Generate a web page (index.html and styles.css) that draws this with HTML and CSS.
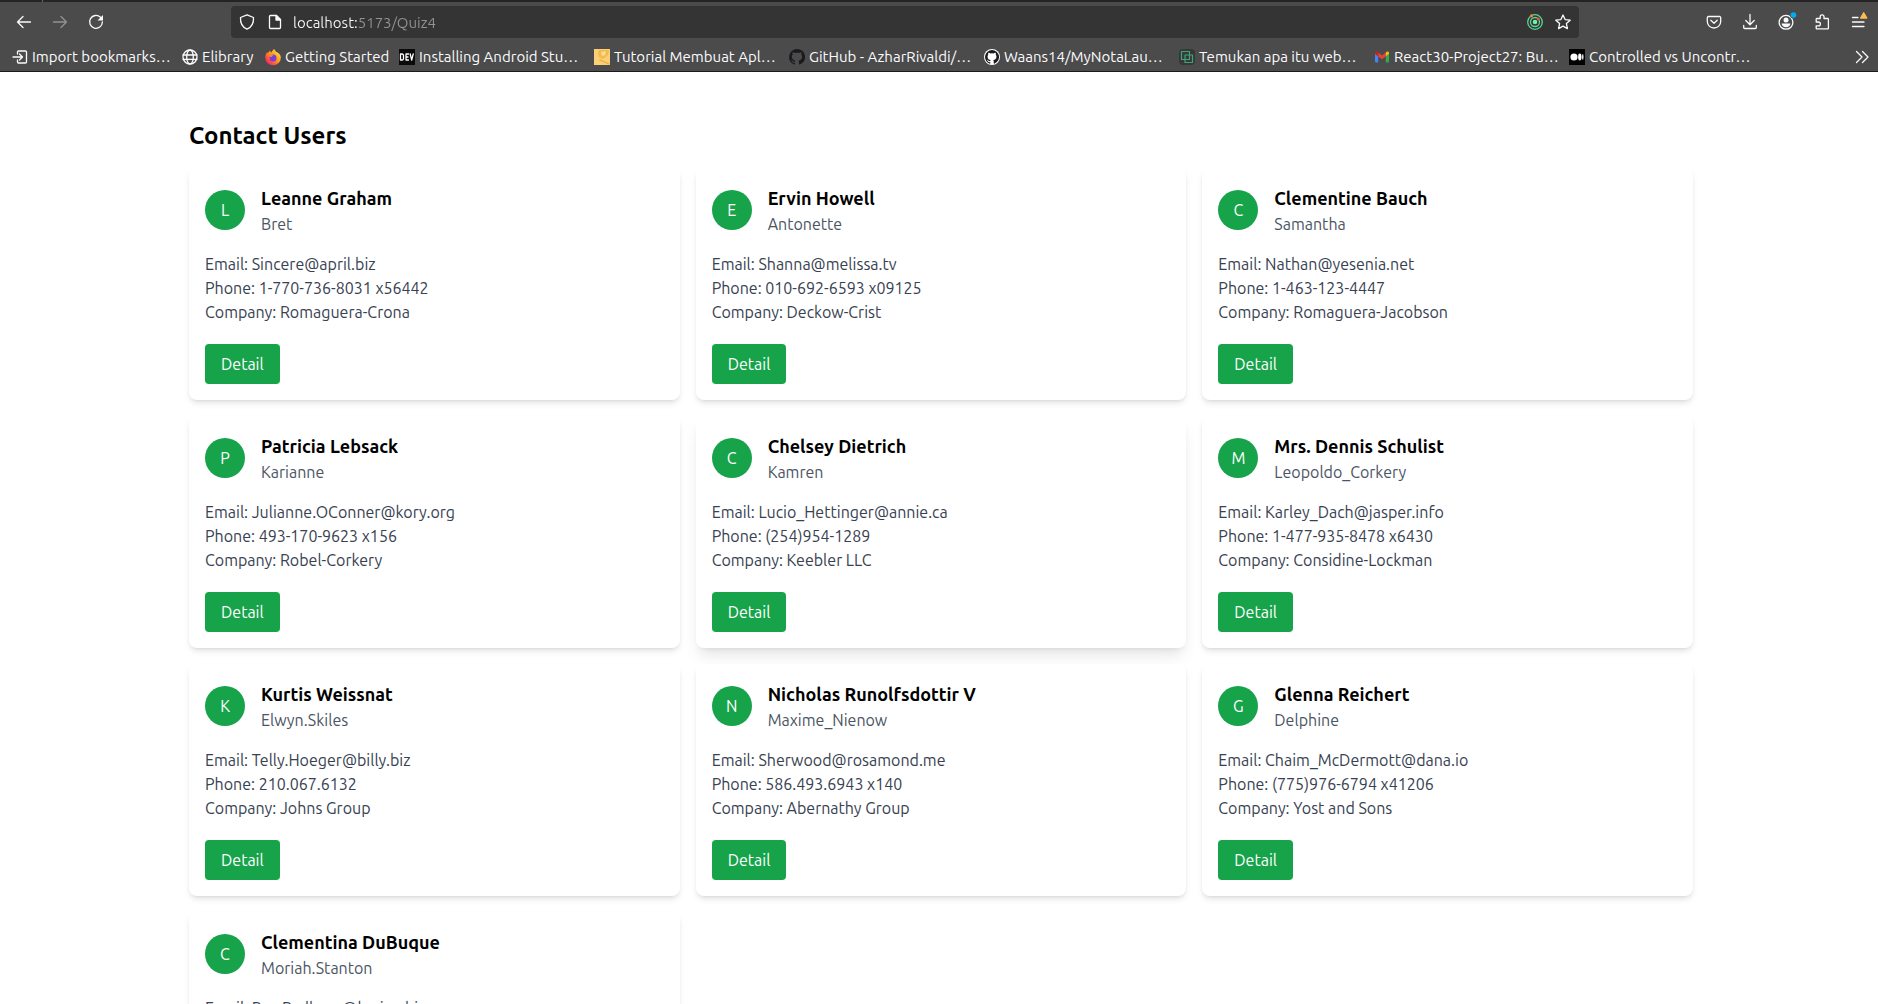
FILE: index.html
```html
<!DOCTYPE html>
<html lang="en">
<head>
<meta charset="utf-8">
<title>Contact Users</title>
<link rel="stylesheet" href="styles.css">
</head>
<body>
<header class="browser">
  <div class="tab-edge"></div>
  <div class="toolbar">
    <nav class="tools" aria-label="History">
      <button class="tool" aria-label="Back"><svg class="icon" viewBox="0 0 16 16"><path d="M14.500 8H1.500M7 2.500 1.500 8 7 13.500"/></svg></button>
      <button class="tool tool-off" aria-label="Forward" disabled><svg class="icon" viewBox="0 0 16 16"><path d="M1.500 8h13M9 2.500 14.500 8 9 13.500"/></svg></button>
      <button class="tool" aria-label="Reload"><svg class="icon" viewBox="0 0 16 16"><path d="M12.500 3.300A6.400 6.400 0 1 0 14.400 8"/><path d="M15 1v5.500H9.500z" fill="currentColor" stroke="none"/></svg></button>
    </nav>
    <div class="urlbar">
      <svg class="icon" viewBox="0 0 16 16"><path d="M8 .8 14.500 3.500c.3 5-1.500 9.500-6.500 11.700C3 13 1.200 8.500 1.500 3.500z"/></svg>
      <svg class="icon" viewBox="0 0 16 16"><path d="M3.500 1.500H9.500l4 4v8a1 1 0 0 1-1 1h-9a1 1 0 0 1-1-1v-11a1 1 0 0 1 1-1z"/><path class="solid" d="M9 1.500V6h4.500z"/></svg>
      <input class="url" type="text" aria-label="Address" value="localhost:5173/Quiz4">
      <svg class="icon" viewBox="0 0 16 16"><g stroke="#5bd69a"><circle cx="8" cy="8" r="7.300"/><circle cx="8" cy="8" r="4.500"/></g><circle cx="8" cy="8" r="2.300" fill="#6ff0a8" stroke="none"/><circle cx="4.500" cy="1.800" r="1.600" fill="#f5822a" stroke="none"/><circle cx="11.300" cy="5" r="1.500" fill="#f2502a" stroke="none"/></svg>
      <svg class="icon" viewBox="0 0 16 16"><path d="m8 1 2.100 4.600 5.100.6-3.800 3.400 1 5L8 12.100l-4.400 2.500 1-5L.8 6.200l5.100-.6z"/></svg>
    </div>
    <div class="tools">
      <button class="tool" aria-label="Save to Pocket"><svg class="icon" viewBox="0 0 16 16"><path d="M2.500 2.500h11a1.200 1.200 0 0 1 1.200 1.200V7.500a6.700 6.500 0 0 1-13.400 0V3.700a1.200 1.200 0 0 1 1.200-1.200zM4.800 6.300 8 9.300l3.200-3"/></svg></button>
      <button class="tool" aria-label="Downloads"><svg class="icon" viewBox="0 0 16 16"><path d="M8 .5v10M3.800 6.500 8 10.700l4.200-4.200M1.700 11.500v2a1 1 0 0 0 1 1h10.600a1 1 0 0 0 1-1v-2"/></svg></button>
      <button class="tool" aria-label="Account"><svg class="icon" viewBox="0 0 16 16"><circle cx="8" cy="8.300" r="6.900"/><g fill="currentColor" stroke="none"><circle cx="8" cy="6" r="2.500"/><path d="M3.500 9.500h9c-.3 2.400-2.200 3.800-4.500 3.800s-4.200-1.400-4.500-3.800z"/></g><circle cx="15.500" cy="1" r="3.500" fill="#4b4b4b" stroke="none"/><circle cx="15.500" cy="1" r="2.800" fill="#00adf0" stroke="none"/></svg></button>
      <button class="tool" aria-label="Extensions"><svg class="icon" viewBox="0 0 16 16"><path d="M2.200 8V5.200a.7.700 0 0 1 .7-.7h3.300V2.700a1.900 1.900 0 0 1 3.800 0v1.800h3.700a.7.700 0 0 1 .7.700v9a.7.700 0 0 1-.7.700H2.900a.7.700 0 0 1-.7-.7v-2.400h2.300a1.900 1.900 0 0 0 0-3.800z"/></svg></button>
      <button class="tool" aria-label="Menu"><svg class="icon" viewBox="0 0 16 16"><path d="M2.500 3.500H8M2.500 8h11.500M2.500 12.500h11.500"/><path d="M13.700-1.200 16.800 4h-6.200z" fill="#ffbd4f" stroke="#ffbd4f"/></svg></button>
    </div>
  </div>
  <nav class="bookmarks" aria-label="Bookmarks">
    <a class="bookmark bookmark-import" href="#"><svg class="icon" viewBox="0 0 16 16"><path d="M5.500 5V3a1 1 0 0 1 1-1h7a1 1 0 0 1 1 1v10a1 1 0 0 1-1 1h-7a1 1 0 0 1-1-1v-2M1 8h9M7.500 5l3 3-3 3"/></svg>Import bookmarks…</a>
    <a class="bookmark bookmark-short" href="#"><svg class="icon" viewBox="0 0 16 16"><circle cx="8" cy="8" r="7"/><ellipse cx="8" cy="8" rx="3.300" ry="7"/><path d="M1 6h14M1 10.300h14"/></svg>Elibrary</a>
    <a class="bookmark bookmark-medium" href="#"><svg class="icon" viewBox="0 0 16 16" stroke="none"><defs><linearGradient id="fire" x1="1" y1="0" x2="0" y2="1"><stop offset="0" stop-color="#fff44f"/><stop offset=".45" stop-color="#ff9a1f"/><stop offset=".8" stop-color="#ff3750"/><stop offset="1" stop-color="#e31587"/></linearGradient></defs><path fill="url(#fire)" d="M9 0c1 1 1.700 1.800 2 2.800 3 1.200 5 3.200 4.800 6A7.700 7.300 0 0 1 .3 9C.1 6.500 1 4.500 2.200 3l.6 1.400C3.500 3.200 4.500 2.500 5 1.500c.2 1 .7 1.700 1.500 2C7 2 8 1.200 9 0z"/><circle cx="8" cy="9" r="3.500" fill="#7a3fd6"/><path fill="#ff8a16" d="M3.500 5.500C5 5 7 5 8.500 6.500 7 6.500 7.500 8 6 8s-2-1-2.500-2.500z"/></svg>Getting Started</a>
    <a class="bookmark" href="#"><svg class="icon" viewBox="0 0 16 16" stroke="none"><path fill="#0a0a0a" d="M0 0h16v16H0z"/><path stroke="#fff" stroke-width="1.300" d="M1.500 5v6H3c1 0 1.500-.6 1.500-1.500v-3C4.500 5.600 4 5 3 5zM9.500 5H7v6h2.500M7 8h2M11.200 5l1.500 6 1.500-6"/></svg>Installing Android Stu…</a>
    <a class="bookmark" href="#"><svg class="icon" viewBox="0 0 16 16" stroke="none"><path fill="#f9cf78" d="M0 0h16v16H0z"/><path fill="#f5b94c" d="M5 1h10l-1 5-5 4-4-2-1-4z"/><path fill="#fbdc9a" d="m7 3 5-1-1 4-3 1z"/><path stroke="#f0aa32" d="m6 11 9 4"/></svg>Tutorial Membuat Apl…</a>
    <a class="bookmark" href="#"><svg class="icon" viewBox="0 0 16 16" stroke="none"><path fill="#1b1b1f" d="M8 0a8 8 0 0 0-2.500 15.600c.4.100.5-.2.500-.4v-1.400c-2.200.5-2.700-1-2.700-1-.4-.9-.9-1.200-.9-1.200-.7-.5.1-.5.100-.5.800.1 1.200.8 1.200.8.700 1.200 1.900.9 2.300.7.100-.5.300-.9.500-1.100-1.800-.2-3.600-.9-3.600-4 0-.9.300-1.600.8-2.100-.1-.2-.4-1 .1-2.100 0 0 .7-.2 2.200.8a7.500 7.500 0 0 1 4 0c1.500-1 2.200-.8 2.200-.8.500 1.100.2 1.900.1 2.100.5.600.8 1.300.8 2.100 0 3.100-1.900 3.800-3.700 4 .3.300.6.800.6 1.500v2.200c0 .2.100.5.600.4A8 8 0 0 0 8 0z"/></svg>GitHub - AzharRivaldi/…</a>
    <a class="bookmark" href="#"><svg class="icon" viewBox="0 0 16 16" stroke="none"><circle cx="8" cy="8" r="8" fill="#fff"/><path transform="translate(1 1) scale(.875)" fill="#1b1b1f" d="M8 0a8 8 0 0 0-2.500 15.600c.4.100.5-.2.500-.4v-1.400c-2.200.5-2.700-1-2.700-1-.4-.9-.9-1.200-.9-1.200-.7-.5.1-.5.100-.5.800.1 1.200.8 1.200.8.700 1.200 1.900.9 2.300.7.100-.5.300-.9.500-1.100-1.800-.2-3.600-.9-3.600-4 0-.9.300-1.600.8-2.100-.1-.2-.4-1 .1-2.100 0 0 .7-.2 2.200.8a7.500 7.500 0 0 1 4 0c1.500-1 2.200-.8 2.200-.8.500 1.100.2 1.900.1 2.100.5.600.8 1.300.8 2.100 0 3.100-1.900 3.800-3.700 4 .3.300.6.800.6 1.500v2.200c0 .2.100.5.600.4A8 8 0 0 0 8 0z"/></svg>Waans14/MyNotaLau…</a>
    <a class="bookmark" href="#"><svg class="icon" viewBox="0 0 16 16" stroke="none"><rect width="16" height="16" rx="4" fill="#383838"/><path stroke="#3aa57a" stroke-width="1.200" d="M2.500 2.500h8v8h-8zM6 6h7.500v7.500H6z"/></svg>Temukan apa itu web…</a>
    <a class="bookmark" href="#"><svg class="icon" viewBox="0 0 16 16" stroke="none"><path fill="#4285f4" d="M1 4.500 4.200 7v6.500H2a1 1 0 0 1-1-1z"/><path fill="#34a853" d="M15 4.500 11.800 7v6.500H14a1 1 0 0 0 1-1z"/><path fill="#ea4335" d="M4.200 3.500 8 6.500l3.800-3V7.300L8 10.200 4.200 7.300z"/><path fill="#c5221f" d="M1 4c0-1.500 1.700-2 2.700-1l.5.500v3.800L1 4.900z"/><path fill="#fbbc04" d="M15 4c0-1.500-1.700-2-2.700-1l-.5.500v3.800L15 4.900z"/></svg>React30-Project27: Bu…</a>
    <a class="bookmark" href="#"><svg class="icon" viewBox="0 0 16 16" stroke="none"><path fill="#000" d="M0 0h16v16H0z"/><g fill="#fff"><circle cx="5" cy="8" r="3.600"/><ellipse cx="10.800" cy="8" rx="1.700" ry="3.400"/><ellipse cx="13.800" cy="8" rx=".7" ry="3"/></g></svg>Controlled vs Uncontr…</a>
    <button class="more" aria-label="More bookmarks"><svg class="icon" viewBox="0 0 16 16"><path d="m2.500 2.500 5.500 5.500-5.500 5.500M8.500 2.500 14 8l-5.500 5.500"/></svg></button>
  </nav>
</header>
<main class="page">
  <div class="container">
    <h1 class="title">Contact Users</h1>
    <div class="grid">
      <article class="card">
        <div class="person"><span class="avatar">L</span><div><h2 class="name">Leanne Graham</h2><p class="username">Bret</p></div></div>
        <div class="info"><p>Email: Sincere@april.biz</p><p>Phone: 1-770-736-8031 x56442</p><p>Company: Romaguera-Crona</p></div>
        <button class="detail">Detail</button>
      </article>
      <article class="card">
        <div class="person"><span class="avatar">E</span><div><h2 class="name">Ervin Howell</h2><p class="username">Antonette</p></div></div>
        <div class="info"><p>Email: Shanna@melissa.tv</p><p>Phone: 010-692-6593 x09125</p><p>Company: Deckow-Crist</p></div>
        <button class="detail">Detail</button>
      </article>
      <article class="card">
        <div class="person"><span class="avatar">C</span><div><h2 class="name">Clementine Bauch</h2><p class="username">Samantha</p></div></div>
        <div class="info"><p>Email: Nathan@yesenia.net</p><p>Phone: 1-463-123-4447</p><p>Company: Romaguera-Jacobson</p></div>
        <button class="detail">Detail</button>
      </article>
      <article class="card">
        <div class="person"><span class="avatar">P</span><div><h2 class="name">Patricia Lebsack</h2><p class="username">Karianne</p></div></div>
        <div class="info"><p>Email: Julianne.OConner@kory.org</p><p>Phone: 493-170-9623 x156</p><p>Company: Robel-Corkery</p></div>
        <button class="detail">Detail</button>
      </article>
      <article class="card card-raised">
        <div class="person"><span class="avatar">C</span><div><h2 class="name">Chelsey Dietrich</h2><p class="username">Kamren</p></div></div>
        <div class="info"><p>Email: Lucio_Hettinger@annie.ca</p><p>Phone: (254)954-1289</p><p>Company: Keebler LLC</p></div>
        <button class="detail">Detail</button>
      </article>
      <article class="card">
        <div class="person"><span class="avatar">M</span><div><h2 class="name">Mrs. Dennis Schulist</h2><p class="username">Leopoldo_Corkery</p></div></div>
        <div class="info"><p>Email: Karley_Dach@jasper.info</p><p>Phone: 1-477-935-8478 x6430</p><p>Company: Considine-Lockman</p></div>
        <button class="detail">Detail</button>
      </article>
      <article class="card">
        <div class="person"><span class="avatar">K</span><div><h2 class="name">Kurtis Weissnat</h2><p class="username">Elwyn.Skiles</p></div></div>
        <div class="info"><p>Email: Telly.Hoeger@billy.biz</p><p>Phone: 210.067.6132</p><p>Company: Johns Group</p></div>
        <button class="detail">Detail</button>
      </article>
      <article class="card">
        <div class="person"><span class="avatar">N</span><div><h2 class="name">Nicholas Runolfsdottir V</h2><p class="username">Maxime_Nienow</p></div></div>
        <div class="info"><p>Email: Sherwood@rosamond.me</p><p>Phone: 586.493.6943 x140</p><p>Company: Abernathy Group</p></div>
        <button class="detail">Detail</button>
      </article>
      <article class="card">
        <div class="person"><span class="avatar">G</span><div><h2 class="name">Glenna Reichert</h2><p class="username">Delphine</p></div></div>
        <div class="info"><p>Email: Chaim_McDermott@dana.io</p><p>Phone: (775)976-6794 x41206</p><p>Company: Yost and Sons</p></div>
        <button class="detail">Detail</button>
      </article>
      <article class="card">
        <div class="person"><span class="avatar">C</span><div><h2 class="name">Clementina DuBuque</h2><p class="username">Moriah.Stanton</p></div></div>
        <div class="info"><p>Email: Rey.Padberg@karina.biz</p><p>Phone: 024-648-3804</p><p>Company: Hoeger LLC</p></div>
        <button class="detail">Detail</button>
      </article>
    </div>
  </div>
</main>
</body>
</html>
```
FILE: styles.css
```css
*, *::before, *::after { box-sizing: border-box; }
body {
  margin: 0;
  height: 100vh;
  display: flex;
  flex-direction: column;
  background: #fff;
  color: #000;
  font-family: Ubuntu, "Noto Sans", "Open Sans", sans-serif;
  font-size: 16px;
  line-height: 24px;
}
h1, h2, p { margin: 0; }
button { border: 0; padding: 0; font: inherit; color: inherit; background: none; }
a { color: inherit; text-decoration: none; }

/* Browser chrome */
.browser {
  flex: none;
  color: #fbfbfe;
  background: #4b4b4b;
  border-bottom: 1px solid #1c1b1c;
  font-size: 15px;
}
.tab-edge {
  height: 2px;
  background: linear-gradient(90deg, #242424 42px, #6a6a6a 42px, #6a6a6a 43px, #242424 43px);
}
.toolbar { display: flex; align-items: center; height: 40px; padding: 0 2px 0 6px; }
.tools { display: flex; flex: none; }
.tool { display: grid; place-items: center; width: 36px; height: 36px; }
.tool-off { opacity: .4; }
.icon {
  flex: none;
  width: 16px;
  height: 16px;
  overflow: visible;
  fill: none;
  stroke: currentColor;
  stroke-width: 1.3;
  stroke-linecap: round;
  stroke-linejoin: round;
}
.icon[stroke="none"] { stroke: none; }
.solid { fill: currentColor; }
.urlbar {
  display: flex;
  align-items: center;
  gap: 12px;
  flex: 1;
  height: 32px;
  margin: 0 117px;
  padding: 0 8px;
  border-radius: 4px;
  background: #343434;
}
.url {
  flex: 1;
  min-width: 0;
  height: 32px;
  margin-left: -2px;
  padding: 0;
  border: 0;
  outline: 0;
  font: inherit;
  color: transparent;
  background: linear-gradient(90deg, #fbfbfe 64px, #929292 64px);
  -webkit-background-clip: text;
  background-clip: text;
}
.bookmarks { display: flex; align-items: center; height: 29px; padding: 0 8px 0 12px; white-space: nowrap; }
.bookmark { display: flex; align-items: center; gap: 4px; flex: 0 0 195px; }
.bookmark-import { flex-basis: 170px; }
.bookmark-short { flex-basis: 83px; }
.bookmark-medium { flex-basis: 134px; }
.more { display: flex; margin-left: auto; }

/* Contact list */
.page { flex: 1; min-height: 0; overflow-y: auto; scrollbar-width: none; padding: 48px 0 48px 4px; }
.container { max-width: 1536px; margin: 0 auto; padding: 0 16px; }
.title { margin-bottom: 16px; font-size: 24px; font-weight: 700; line-height: 32px; }
.grid { display: grid; grid-template-columns: repeat(3, 1fr); gap: 16px; }
.card {
  padding: 16px;
  border-radius: 8px;
  background: #fff;
  box-shadow: 0 4px 6px -1px rgb(0 0 0 / .1), 0 2px 4px -2px rgb(0 0 0 / .1);
}
.card-raised { box-shadow: 0 10px 15px -3px rgb(0 0 0 / .1), 0 4px 6px -4px rgb(0 0 0 / .1); }
.person { display: flex; align-items: center; gap: 16px; margin-bottom: 16px; }
.avatar {
  display: grid;
  place-items: center;
  width: 40px;
  height: 40px;
  border-radius: 50%;
  color: #fff;
  background: #16a34a;
}
.name { font-size: 18px; font-weight: 700; line-height: 28px; }
.username { color: #4b5563; }
.info { margin-bottom: 20px; color: #374151; }
.detail { display: block; padding: 8px 16px; border-radius: 4px; color: #fff; background: #16a34a; }
```
